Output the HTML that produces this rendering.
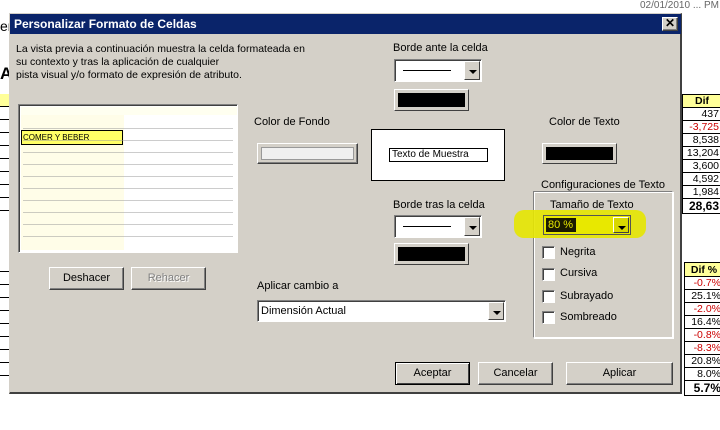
<!DOCTYPE html>
<html><head><meta charset="utf-8"><style>
*{margin:0;padding:0;box-sizing:border-box}
body{width:720px;height:430px;background:#fff;position:relative;overflow:hidden;font-family:"Liberation Sans",sans-serif;font-size:11px;color:#000}
.a{position:absolute}
.dlg{left:9px;top:13px;width:673px;height:381px;background:#d4d0c8;border:1px solid #d4d0c8;border-right:2px solid #404040;border-bottom:2px solid #404040}
.t{position:absolute;white-space:nowrap;font-size:11px}
.btn{position:absolute;background:#d4d0c8;border:1px solid;border-color:#fff #404040 #404040 #fff;box-shadow:inset -1px -1px 0 #808080;text-align:center;font-size:11px}
.sunk{position:absolute;background:#fff;border:1px solid;border-color:#808080 #fff #fff #808080;box-shadow:inset 1px 1px 0 #404040}
.arr{position:absolute;right:1px;top:1px;bottom:1px;width:16px;background:#d4d0c8;border:1px solid;border-color:#fff #404040 #404040 #fff}
.arr:after{content:"";position:absolute;left:4px;top:8px;border-left:4px solid transparent;border-right:4px solid transparent;border-top:4px solid #000}
.line{position:absolute;left:8px;top:10px;width:48px;border-top:1px solid #000}
.blk{position:absolute;background:#d4d0c8;border:1px solid;border-color:#fff #404040 #404040 #fff}
.blk i{position:absolute;left:3px;top:3px;right:3px;bottom:3px;background:#000}
.cb{position:absolute;width:13px;height:13px;background:#fff;border:1px solid;border-color:#808080 #fff #fff #808080;box-shadow:inset 1px 1px 0 #404040}
.tb td{border:1px solid #000;height:12.5px;font-size:10.5px;text-align:right;padding:0 2px;background:#fff}
.tb{border-collapse:collapse;position:absolute}
</style></head><body>
<div class="a" style="left:0;top:18px;font-size:14px">er</div>
<div class="a" style="left:0;top:64px;font-size:17px;font-weight:bold">A</div>
<div class="a" style="left:0;top:94px;width:9px;height:12px;background:#ffff99"></div>
<div class="a" style="left:0;top:106px;width:9px;height:105px;border-top:1px solid #000;background:repeating-linear-gradient(#fff 0 12px,#000 12px 13px)"></div>
<div class="a" style="left:0;top:259px;width:9px;height:128px;background:repeating-linear-gradient(#fff 0 12px,#000 12px 13px)"></div>
<div class="a" style="left:640px;top:0;font-size:10px;color:#666">02/01/2010 ... PM</div>
<table class="tb" style="left:682px;top:94px;width:40px">
<tr><td style="background:#ffff99;font-weight:bold;text-align:center">Dif</td></tr>
<tr><td>437</td></tr><tr><td style="color:#c00">-3,725</td></tr><tr><td>8,538</td></tr><tr><td>13,204</td></tr><tr><td>3,600</td></tr><tr><td>4,592</td></tr><tr><td>1,984</td></tr><tr><td style="font-weight:bold;font-size:12px">28,63</td></tr></table>
<table class="tb" style="left:684px;top:262px;width:40px">
<tr><td style="background:#ffff99;font-weight:bold;text-align:center;height:14px">Dif %</td></tr>
<tr><td style="color:#c00">-0.7%</td></tr><tr><td>25.1%</td></tr><tr><td style="color:#c00">-2.0%</td></tr><tr><td>16.4%</td></tr><tr><td style="color:#c00">-0.8%</td></tr><tr><td style="color:#c00">-8.3%</td></tr><tr><td>20.8%</td></tr><tr><td>8.0%</td></tr><tr><td style="font-weight:bold;font-size:12px">5.7%</td></tr></table>

<div class="a dlg"></div>
<div class="a" style="left:10px;top:14px;width:671px;height:20px;background:#0a246a"></div>
<div class="t" style="left:14px;top:17px;color:#fff;font-weight:bold;font-size:12px">Personalizar Formato de Celdas</div>
<div class="btn" style="left:662px;top:17px;width:16px;height:14px;font-weight:bold;font-size:12px;line-height:11px">✕</div>

<div class="t" style="left:16px;top:43px;line-height:13px;font-size:10.5px">La vista previa a continuación muestra la celda formateada en<br>su contexto y tras la aplicación de cualquier<br>pista visual y/o formato de expresión de atributo.</div>

<div class="sunk" style="left:18px;top:104px;width:220px;height:149px;background:#fff">
<div class="a" style="left:2px;top:2px;width:103px;height:143px;background:#fffde8"></div>
<div class="a" style="left:2px;top:2px;right:0;height:8px;background:#fffff0"></div>
<div class="a" style="left:2px;top:25px;width:102px;height:15px;background:#ffff66;border:1px solid #000;font-size:8px;line-height:13px;padding-left:1px">COMER Y BEBER</div>
<div class="a" style="left:4px;top:12px;width:210px;height:120px;background:repeating-linear-gradient(transparent 0 11px,#999 11px 12px);opacity:.5"></div>
</div>

<div class="btn" style="left:49px;top:267px;width:75px;height:23px;line-height:20px">Deshacer</div>
<div class="btn" style="left:131px;top:267px;width:75px;height:23px;line-height:20px;color:#808080;text-shadow:1px 1px #fff">Rehacer</div>

<div class="t" style="left:254px;top:116px">Color de Fondo</div>
<div class="btn" style="left:257px;top:143px;width:101px;height:21px"><div class="a" style="left:3px;top:3px;right:3px;bottom:3px;background:#f0f0f0;border:1px solid #999"></div></div>

<div class="t" style="left:393px;top:42px">Borde ante la celda</div>
<div class="sunk" style="left:394px;top:59px;width:88px;height:23px"><div class="line"></div><div class="arr"></div></div>
<div class="blk" style="left:394px;top:89px;width:75px;height:22px"><i></i></div>

<div class="a" style="left:371px;top:129px;width:134px;height:52px;background:#fff;border:1px solid #000"></div>
<div class="a" style="left:389px;top:148px;width:99px;height:14px;background:#fff;border:1px solid #000;font-size:10px;line-height:12px;padding-left:2px;white-space:nowrap">Texto de Muestra</div>

<div class="t" style="left:549px;top:116px">Color de Texto</div>
<div class="blk" style="left:542px;top:143px;width:75px;height:21px"><i></i></div>

<div class="t" style="left:393px;top:199px">Borde tras la celda</div>
<div class="sunk" style="left:394px;top:215px;width:88px;height:23px"><div class="line"></div><div class="arr"></div></div>
<div class="blk" style="left:394px;top:243px;width:75px;height:22px"><i></i></div>

<div class="a" style="left:533px;top:191px;width:140px;height:147px;border:1px solid;border-color:#808080 #fff #fff #808080;box-shadow:1px 1px 0 #fff,inset 1px 1px 0 #fff"></div>
<div class="t" style="left:539px;top:179px;background:#d4d0c8;padding:0 2px">Configuraciones de Texto</div>
<div class="t" style="left:550px;top:199px">Tamaño de Texto</div>
<div class="a" style="left:514px;top:210px;width:132px;height:28px;background:#e5e500;border-radius:10px;opacity:.9"></div>
<div class="a" style="left:543px;top:215px;width:88px;height:20px;border:1px solid #555;background:#e8e800">
<div class="a" style="left:2px;top:2px;width:30px;height:14px;background:#1a1a00;color:#e8e800;font-size:11px;line-height:14px;padding-left:2px">80 %</div>
<div class="arr" style="background:#d8d800"></div></div>

<div class="cb" style="left:542px;top:246px"></div><div class="t" style="left:560px;top:246px">Negrita</div>
<div class="cb" style="left:542px;top:268px"></div><div class="t" style="left:560px;top:267px">Cursiva</div>
<div class="cb" style="left:542px;top:290px"></div><div class="t" style="left:560px;top:290px">Subrayado</div>
<div class="cb" style="left:542px;top:311px"></div><div class="t" style="left:560px;top:311px">Sombreado</div>

<div class="t" style="left:257px;top:280px">Aplicar cambio a</div>
<div class="sunk" style="left:257px;top:300px;width:249px;height:22px"><div class="t" style="left:3px;top:4px">Dimensión Actual</div><div class="arr"></div></div>

<div class="btn" style="left:395px;top:362px;width:75px;height:23px;line-height:20px;border:1px solid #000;box-shadow:inset 1px 1px 0 #fff,inset -1px -1px 0 #404040">Aceptar</div>
<div class="btn" style="left:478px;top:362px;width:75px;height:23px;line-height:20px">Cancelar</div>
<div class="btn" style="left:566px;top:362px;width:107px;height:23px;line-height:20px">Aplicar</div>
</body></html>
